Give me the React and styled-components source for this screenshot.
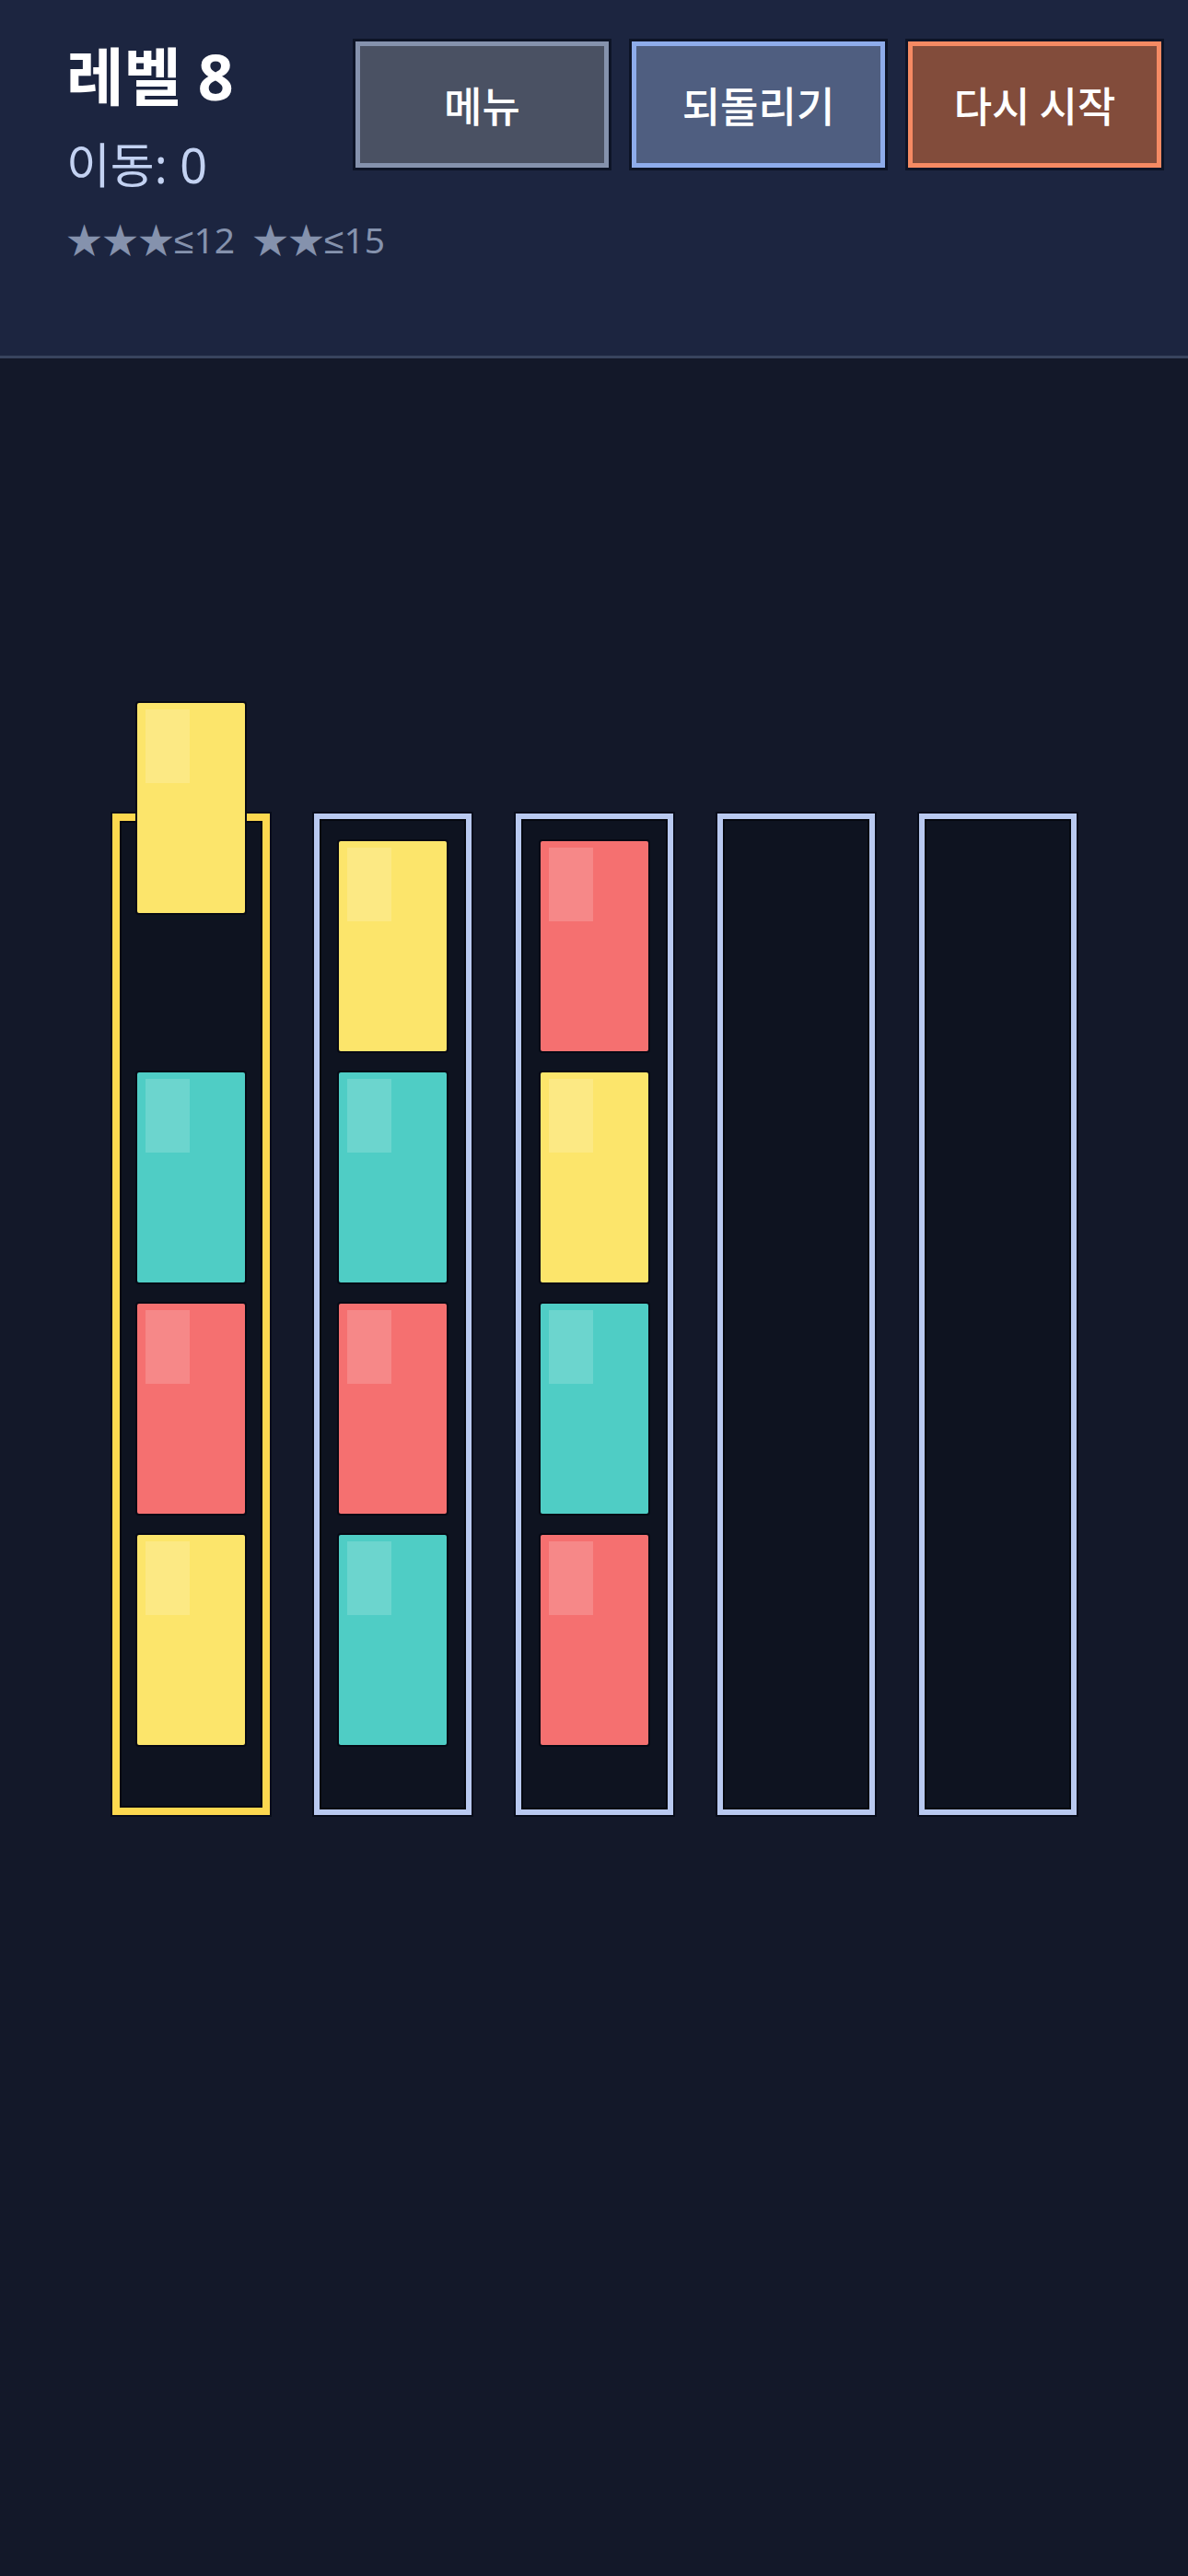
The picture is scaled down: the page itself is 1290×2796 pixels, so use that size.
import React from 'react'
import styled, { createGlobalStyle } from 'styled-components'

const GlobalStyle = createGlobalStyle`
  html, body {
    margin: 0;
    padding: 0;
    background: #131829;
  }
  body {
    font-family: "Noto Sans", "Noto Sans CJK KR", sans-serif;
  }
`

const COLORS = {
  yellow: '#fce56b',
  teal: '#4fcdc5',
  red: '#f57070',
}

// 블록은 위에서부터 적음 (아래로 정렬됨)
const tubes = [
  { blocks: ['yellow', 'teal', 'red', 'yellow'], selected: true, lifted: 0 },
  { blocks: ['yellow', 'teal', 'red', 'teal'] },
  { blocks: ['red', 'yellow', 'teal', 'red'] },
  { blocks: [] },
  { blocks: [] },
]

const Page = styled.div`
  min-height: 2796px;
  background: #131829;
`

const Header = styled.header`
  box-sizing: border-box;
  height: 389px;
  background: #1c2540;
  border-bottom: 3px solid #38445e;
  display: flex;
  align-items: flex-start;
  padding: 45px 29px 0 72px;
`

const Info = styled.div`
  flex: 1;
  min-width: 0;
  display: flex;
  flex-direction: column;
  white-space: nowrap;
`

const Title = styled.h1`
  margin: 0;
  font-size: 68px;
  line-height: 76px;
  font-weight: 700;
  color: #ffffff;
`

const Moves = styled.div`
  margin-top: 28px;
  font-size: 52px;
  line-height: 60px;
  color: #c3d2f2;
`

const Goals = styled.div`
  margin-top: 28px;
  font-family: "Noto Sans", "Liberation Sans", "Noto Sans CJK KR", sans-serif;
  font-size: 39px;
  line-height: 46px;
  color: #8592ad;
  display: flex;
  gap: 19px;
`

const Buttons = styled.div`
  flex-shrink: 0;
  display: flex;
  gap: 25px;
`

const Button = styled.button`
  box-sizing: border-box;
  width: 275px;
  height: 137px;
  border: 5px solid ${p => p.$border};
  background: ${p => p.$bg};
  box-shadow: 0 0 0 3px #0d1427;
  color: #ffffff;
  font-family: "Noto Sans CJK KR", sans-serif;
  font-size: 45px;
  font-weight: 500;
  cursor: pointer;
`

const Board = styled.main`
  display: flex;
  justify-content: center;
  gap: 48px;
  padding-top: 494px;
`

const Tube = styled.div`
  box-sizing: border-box;
  width: 171px;
  height: 1087px;
  background: #0e1320;
  border: ${p => (p.$selected ? '8px solid #fdd84f' : '6px solid #b9c9f0')};
  box-shadow: 0 0 0 2px #080c1a, inset 0 0 0 2px #05080f;
  display: flex;
  flex-direction: column;
  align-items: center;
  justify-content: flex-end;
  gap: 23px;
  padding-bottom: ${p => (p.$selected ? '68px' : '70px')};
`

const Block = styled.div`
  position: relative;
  width: 117px;
  height: 228px;
  flex-shrink: 0;
  background: ${p => p.$color};
  border-radius: 2px;
  box-shadow: 0 0 0 2px #060914;
  transform: ${p => (p.$lifted ? 'translateY(-150px)' : 'none')};

  &::after {
    content: '';
    position: absolute;
    left: 9px;
    top: 7px;
    width: 48px;
    height: 80px;
    background: rgba(255, 255, 255, 0.17);
  }
`

export default function App() {
  return (
    <Page>
      <GlobalStyle />
      <Header>
        <Info>
          <Title>레벨 8</Title>
          <Moves>이동: 0</Moves>
          <Goals>
            <span>★★★≤12</span>
            <span>★★≤15</span>
          </Goals>
        </Info>
        <Buttons>
          <Button $bg="#4a5163" $border="#8592ad">메뉴</Button>
          <Button $bg="#4f5e80" $border="#8eaceb">되돌리기</Button>
          <Button $bg="#824c3b" $border="#f58a63">다시 시작</Button>
        </Buttons>
      </Header>
      <Board>
        {tubes.map((t, i) => (
          <Tube key={i} $selected={t.selected}>
            {t.blocks.map((c, j) => (
              <Block key={j} $color={COLORS[c]} $lifted={t.lifted === j} />
            ))}
          </Tube>
        ))}
      </Board>
    </Page>
  )
}
